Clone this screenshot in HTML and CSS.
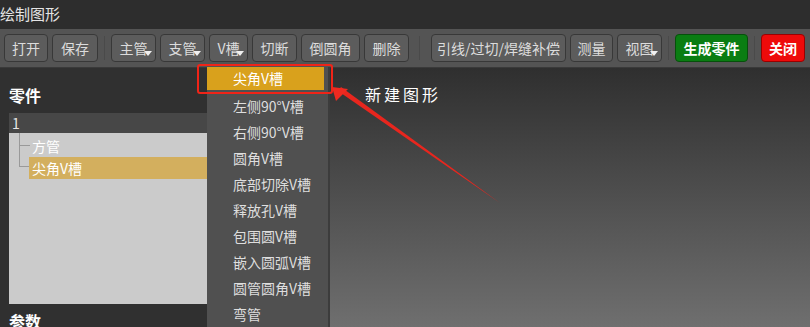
FILE: index.html
```html
<!DOCTYPE html>
<html lang="zh-CN">
  <head>
    <meta charset="UTF-8" />
    <meta name="viewport" content="width=device-width, initial-scale=1.0" />
    <title>绘制图形</title>
    <link rel="stylesheet" href="styles.css">
  </head>
  <body>
    <div class="window">
      <div class="titlebar">绘制图形</div>

      <div class="toolbar">
        <button class="btn w44">打开</button>
        <button class="btn w46">保存</button>
        <span class="sep"></span>
        <button class="btn w45 drop">主管</button>
        <button class="btn w45 drop">支管</button>
        <button class="btn w39 drop">V槽</button>
        <button class="btn w45">切断</button>
        <button class="btn w59">倒圆角</button>
        <button class="btn w45">删除</button>
        <span class="sep wide"></span>
        <button class="btn w135">引线/过切/焊缝补偿</button>
        <button class="btn w43">测量</button>
        <button class="btn w45 drop">视图</button>
        <span class="sep"></span>
        <button class="btn green">生成零件</button>
        <span class="sep"></span>
        <button class="btn red">关闭</button>
      </div>

      <div class="main">
        <div class="side">
          <div class="side-title">零件</div>
          <div class="tree">
            <div class="tree-head">1</div>
            <div class="tree-body">
              <div class="tree-line"></div>
              <div class="node">方管</div>
              <div class="node selected">尖角V槽</div>
            </div>
          </div>
          <div class="side-title params">参数</div>
        </div>
        <div class="canvas">
          <div class="note">新建图形</div>
        </div>
      </div>

      <ul class="menu">
        <li class="active">尖角V槽</li>
        <li>左侧90°V槽</li>
        <li>右侧90°V槽</li>
        <li>圆角V槽</li>
        <li>底部切除V槽</li>
        <li>释放孔V槽</li>
        <li>包围圆V槽</li>
        <li>嵌入圆弧V槽</li>
        <li>圆管圆角V槽</li>
        <li>弯管</li>
      </ul>
      <div class="callout"></div>

      <svg class="arrow" width="810" height="327" viewBox="0 0 810 327">
        <polygon points="338,91 341,87 500,203" fill="#e8261e" />
        <polygon points="332,87 348,89 336,101" fill="#ee2a20" />
      </svg>
    </div>
  </body>
</html>
```

FILE: styles.css
```css
* {
  margin: 0;
  padding: 0;
  box-sizing: border-box;
}
body {
  width: 810px;
  height: 327px;
  overflow: hidden;
  background: #2e2e2e;
  font-family: "Noto Sans CJK SC", "Noto Sans", sans-serif;
}
.window {
  position: relative;
  width: 810px;
  height: 327px;
  display: flex;
  flex-direction: column;
}
.titlebar {
  flex-shrink: 0;
  height: 29px;
  line-height: 28px;
  font-size: 15px;
  color: #e4e4e4;
  background: #2d2d2d;
}
.toolbar {
  flex-shrink: 0;
  height: 39px;
  display: flex;
  align-items: center;
  padding-left: 4px;
  gap: 4px;
  background: #545454;
  border-bottom: 1px solid #3a3a3a;
}
.btn {
  position: relative;
  height: 28px;
  padding: 0;
  font-family: inherit;
  font-size: 14px;
  color: #dcdcdc;
  background: #5c5c5c;
  border: 1px solid #383838;
  border-radius: 4px;
}
.w39 { width: 39px; }
.w43 { width: 43px; }
.w44 { width: 44px; }
.w45 { width: 45px; }
.w46 { width: 46px; }
.w59 { width: 59px; }
.w135 { width: 135px; }
.drop::after {
  content: "";
  position: absolute;
  right: 3px;
  bottom: 5px;
  border-left: 4px solid transparent;
  border-right: 4px solid transparent;
  border-top: 5px solid #f0f0f0;
}
.sep {
  width: 1px;
  height: 24px;
  margin: 0 2px;
  background: #4a4a4a;
}
.sep.wide {
  margin: 0 7px 0 6px;
}
.green {
  width: 73px;
  color: #fff;
  font-weight: bold;
  background: #0a7d12;
  border-color: #06500b;
}
.red {
  width: 44px;
  color: #fff;
  font-weight: bold;
  background: #ee0a0a;
  border-color: #9a0000;
}
.main {
  flex: 1;
  min-height: 0;
  display: flex;
  overflow: hidden;
}
.side {
  flex-shrink: 0;
  width: 330px;
  padding: 15px 0 0 9px;
  background: #303030;
  border-right: 2px solid #272727;
}
.side-title {
  height: 30px;
  font-size: 16px;
  font-weight: bold;
  color: #fff;
}
.params {
  margin-top: 5px;
}
.tree {
  width: 310px;
}
.tree-head {
  height: 20px;
  padding-left: 3px;
  font-size: 14px;
  line-height: 20px;
  color: #e6e6e6;
  background: #474747;
}
.tree-body {
  position: relative;
  height: 171px;
  padding-top: 3px;
  background: #cbcbcb;
}
.tree-line {
  position: absolute;
  left: 10px;
  top: 0;
  width: 10px;
  height: 34px;
  border-left: 1px solid #999;
  border-bottom: 1px solid #999;
}
.tree-line::before {
  content: "";
  position: absolute;
  left: 0;
  top: 12px;
  width: 10px;
  border-top: 1px solid #999;
}
.node {
  margin-left: 20px;
  height: 21px;
  padding-left: 3px;
  font-size: 14px;
  line-height: 21px;
  color: #fff;
}
.selected {
  height: 22px;
  line-height: 22px;
  background: #d3af5e;
}
.canvas {
  flex: 1;
  padding: 14px 0 0 35px;
  background: linear-gradient(#2f2f2f, #6f6f6f);
}
.note {
  font-size: 16px;
  letter-spacing: 3px;
  color: #fff;
}
.menu {
  position: absolute;
  left: 207px;
  top: 67px;
  width: 123px;
  height: 260px;
  list-style: none;
  padding-right: 4px;
  background: #505050;
  border-right: 2px solid #3c3c3c;
}
.menu li {
  height: 26px;
  padding-left: 26px;
  font-size: 14px;
  line-height: 26px;
  color: #dedede;
}
.menu .active {
  height: 23px;
  line-height: 23px;
  margin-bottom: 3px;
  color: #fff;
  background: #d9a11c;
}
.callout {
  position: absolute;
  left: 197px;
  top: 64px;
  width: 136px;
  height: 30px;
  border: 2px solid #f02418;
  border-radius: 3px;
}
.arrow {
  position: absolute;
  left: 0;
  top: 0;
  pointer-events: none;
}
```
